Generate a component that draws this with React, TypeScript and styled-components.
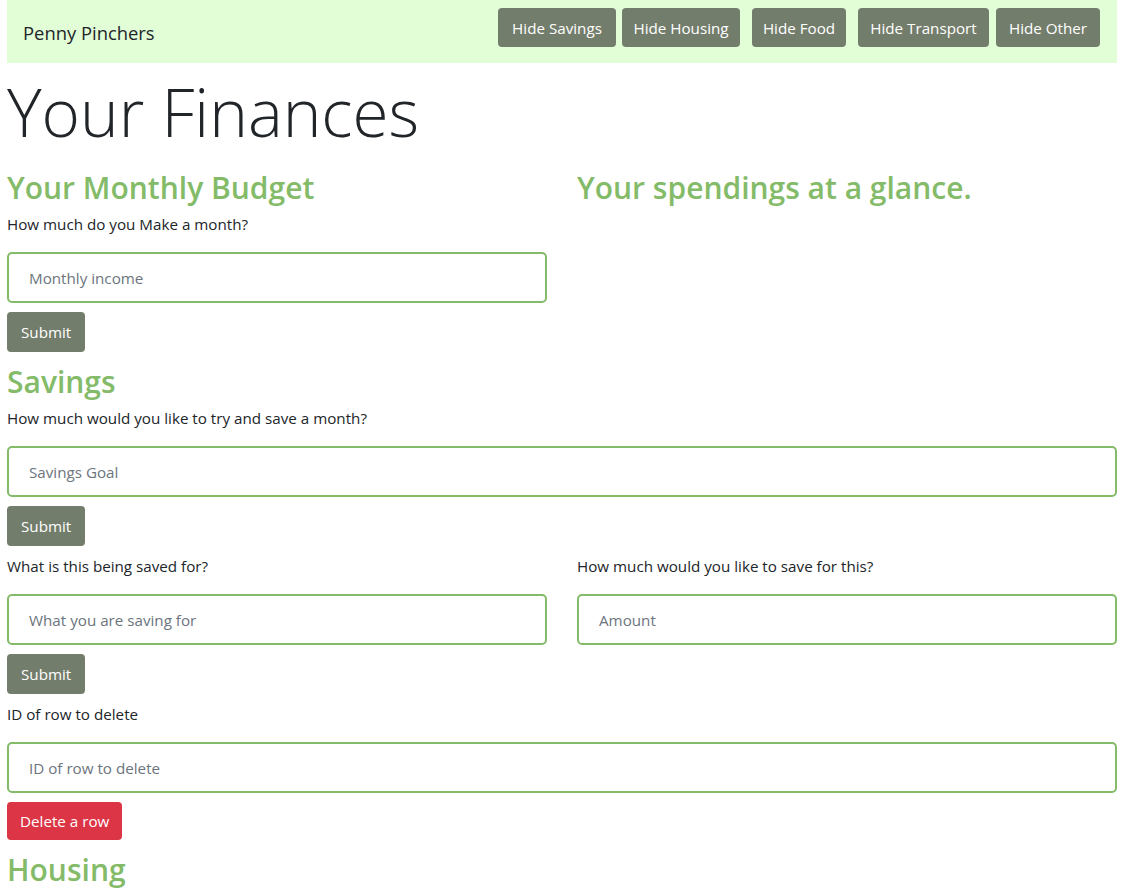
import React from "react";
import styled, { createGlobalStyle } from "styled-components";

const GlobalStyle = createGlobalStyle`
  html, body { margin: 0; padding: 0; background: #fff; }
  body {
    font-family: "Open Sans", "Noto Sans", sans-serif;
    font-size: 15.2px;
    line-height: 1.5;
    color: #212529;
  }
  * { box-sizing: border-box; }
`;

const Page = styled.div`
  width: 1110px;
  margin-left: 7px;
`;

const NavBar = styled.nav`
  height: 63px;
  background: #e1fed7;
  display: flex;
  align-items: flex-start;
  justify-content: space-between;
  padding: 8px 17px 0 16px;
`;

const Brand = styled.span`
  font-size: 18.4px;
  line-height: 30px;
  margin-top: 10px;
  color: #212529;
`;

const NavButtons = styled.div`
  display: flex;
`;

const NavButton = styled.button<{ $gap: number; $w: number }>`
  margin-left: ${(p) => p.$gap}px;
  width: ${(p) => p.$w}px;
  height: 39px;
  padding: 0;
  background: #737d6b;
  color: #fff;
  border: none;
  border-radius: 4px;
  font-family: inherit;
  font-size: 15.2px;
  white-space: nowrap;
`;

const Display = styled.h1`
  font-size: 65.6px;
  font-weight: 300;
  line-height: 86px;
  margin: 6px 0 11px;
  color: #212529;
`;

const Row = styled.div`
  display: grid;
  grid-template-columns: 540px 540px;
  column-gap: 30px;
`;

const Col = styled.div`
  display: flex;
  flex-direction: column;
  align-items: flex-start;
`;

const Heading = styled.h2`
  font-size: 30px;
  font-weight: 600;
  line-height: 38px;
  margin: 3px 0 5px;
  color: #84bb69;
`;

const Label = styled.label`
  display: block;
  font-size: 15.2px;
  line-height: 24px;
  margin-bottom: 16px;
`;

const Input = styled.input`
  display: block;
  width: 100%;
  height: 51px;
  padding: 0 20px;
  border: 2px solid #84bb69;
  border-radius: 5px;
  font-family: inherit;
  font-size: 15.2px;
  color: #495057;
  background: #fff;
  outline: none;
  &::placeholder { color: #6c757d; }
`;

const ActionButton = styled.button<{ $danger?: boolean }>`
  margin-top: 9px;
  margin-bottom: 8px;
  height: ${(p) => (p.$danger ? 38 : 40)}px;
  padding: 0 ${(p) => (p.$danger ? 13 : 14)}px;
  background: ${(p) => (p.$danger ? "#dc3545" : "#737d6b")};
  color: #fff;
  border: none;
  border-radius: 4px;
  font-family: inherit;
  font-size: 15.2px;
`;

const Section = styled.div`
  display: flex;
  flex-direction: column;
  align-items: flex-start;
`;

const navItems = [
  { label: "Hide Savings", gap: 0, w: 118 },
  { label: "Hide Housing", gap: 6, w: 118 },
  { label: "Hide Food", gap: 12, w: 94 },
  { label: "Hide Transport", gap: 12, w: 131 },
  { label: "Hide Other", gap: 7, w: 104 },
];

export default function App() {
  return (
    <>
      <GlobalStyle />
      <Page>
        <NavBar>
          <Brand>Penny Pinchers</Brand>
          <NavButtons>
            {navItems.map((n) => (
              <NavButton key={n.label} $gap={n.gap} $w={n.w}>
                {n.label}
              </NavButton>
            ))}
          </NavButtons>
        </NavBar>
        <Display>Your Finances</Display>
        <Row>
          <Col>
            <Heading>Your Monthly Budget</Heading>
            <Label>How much do you Make a month?</Label>
            <Input placeholder="Monthly income" />
            <ActionButton>Submit</ActionButton>
          </Col>
          <Col>
            <Heading>Your spendings at a glance.</Heading>
          </Col>
        </Row>
        <Section>
          <Heading>Savings</Heading>
          <Label>How much would you like to try and save a month?</Label>
          <Input placeholder="Savings Goal" />
          <ActionButton>Submit</ActionButton>
        </Section>
        <Row>
          <Col>
            <Label>What is this being saved for?</Label>
            <Input placeholder="What you are saving for" />
            <ActionButton>Submit</ActionButton>
          </Col>
          <Col>
            <Label>How much would you like to save for this?</Label>
            <Input placeholder="Amount" />
          </Col>
        </Row>
        <Section>
          <Label>ID of row to delete</Label>
          <Input placeholder="ID of row to delete" />
          <ActionButton $danger>Delete a row</ActionButton>
          <Heading>Housing</Heading>
        </Section>
      </Page>
    </>
  );
}
